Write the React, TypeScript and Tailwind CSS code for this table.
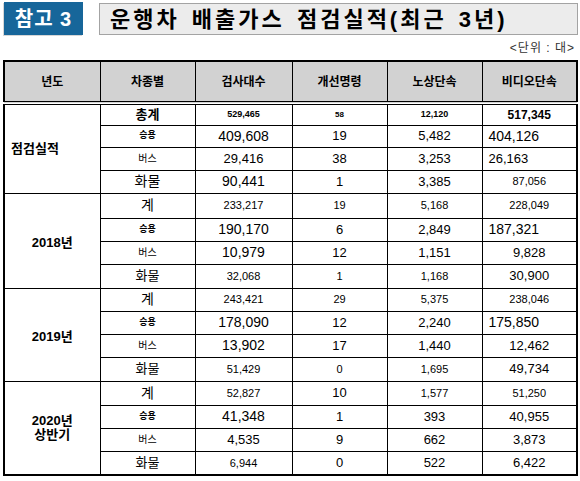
import React from "react";

type Cell = { v: string; c: string };
type Row = { label: string; lc: string; cells: Cell[] };
type Group = { name: string[]; nc: string; heights: string[]; rows: Row[] };

const tiny = "text-[9px] font-bold";
const sm = "text-[11px]";
const md = "text-[13px]";
const lg = "text-[14px]";
const left = "text-left pl-[6px]";

const groups: Group[] = [
  {
    name: ["점검실적"],
    nc: "text-left pl-[6px]",
    heights: ["h-[22px]", "h-[22px]", "h-[23px]", "h-[23px]"],
    rows: [
      {
        label: "총계",
        lc: "text-[13px] font-bold",
        cells: [
          { v: "529,465", c: tiny },
          { v: "58", c: "text-[8px] font-bold" },
          { v: "12,120", c: tiny },
          { v: "517,345", c: "text-[12px] font-bold" },
        ],
      },
      {
        label: "승용",
        lc: "text-[9px] font-bold",
        cells: [
          { v: "409,608", c: lg },
          { v: "19", c: md },
          { v: "5,482", c: md },
          { v: "404,126", c: `${lg} ${left}` },
        ],
      },
      {
        label: "버스",
        lc: "text-[10px]",
        cells: [
          { v: "29,416", c: md },
          { v: "38", c: md },
          { v: "3,253", c: md },
          { v: "26,163", c: `${md} ${left}` },
        ],
      },
      {
        label: "화물",
        lc: "text-[14px]",
        cells: [
          { v: "90,441", c: lg },
          { v: "1", c: md },
          { v: "3,385", c: md },
          { v: "87,056", c: sm },
        ],
      },
    ],
  },
  {
    name: ["2018년"],
    nc: "pt-[4px]",
    heights: ["h-[25px]", "h-[23px]", "h-[23px]", "h-[24px]"],
    rows: [
      {
        label: "계",
        lc: "text-[14px]",
        cells: [
          { v: "233,217", c: sm },
          { v: "19", c: sm },
          { v: "5,168", c: sm },
          { v: "228,049", c: sm },
        ],
      },
      {
        label: "승용",
        lc: "text-[9px] font-bold",
        cells: [
          { v: "190,170", c: lg },
          { v: "6", c: md },
          { v: "2,849", c: md },
          { v: "187,321", c: `${lg} ${left}` },
        ],
      },
      {
        label: "버스",
        lc: "text-[10px]",
        cells: [
          { v: "10,979", c: lg },
          { v: "12", c: md },
          { v: "1,151", c: md },
          { v: "9,828", c: md },
        ],
      },
      {
        label: "화물",
        lc: "text-[13px]",
        cells: [
          { v: "32,068", c: sm },
          { v: "1", c: sm },
          { v: "1,168", c: sm },
          { v: "30,900", c: md },
        ],
      },
    ],
  },
  {
    name: ["2019년"],
    nc: "pt-[4px]",
    heights: ["h-[23px]", "h-[23px]", "h-[23px]", "h-[24px]"],
    rows: [
      {
        label: "계",
        lc: "text-[14px]",
        cells: [
          { v: "243,421", c: sm },
          { v: "29", c: sm },
          { v: "5,375", c: sm },
          { v: "238,046", c: sm },
        ],
      },
      {
        label: "승용",
        lc: "text-[9px] font-bold",
        cells: [
          { v: "178,090", c: lg },
          { v: "12", c: md },
          { v: "2,240", c: md },
          { v: "175,850", c: `${lg} ${left}` },
        ],
      },
      {
        label: "버스",
        lc: "text-[10px]",
        cells: [
          { v: "13,902", c: lg },
          { v: "17", c: md },
          { v: "1,440", c: md },
          { v: "12,462", c: md },
        ],
      },
      {
        label: "화물",
        lc: "text-[13px]",
        cells: [
          { v: "51,429", c: sm },
          { v: "0", c: sm },
          { v: "1,695", c: sm },
          { v: "49,734", c: md },
        ],
      },
    ],
  },
  {
    name: ["2020년", "상반기"],
    nc: "",
    heights: ["h-[24px]", "h-[23px]", "h-[23px]", "h-[24px]"],
    rows: [
      {
        label: "계",
        lc: "text-[14px]",
        cells: [
          { v: "52,827", c: sm },
          { v: "10", c: md },
          { v: "1,577", c: sm },
          { v: "51,250", c: sm },
        ],
      },
      {
        label: "승용",
        lc: "text-[9px] font-bold",
        cells: [
          { v: "41,348", c: lg },
          { v: "1", c: md },
          { v: "393", c: md },
          { v: "40,955", c: md },
        ],
      },
      {
        label: "버스",
        lc: "text-[10px]",
        cells: [
          { v: "4,535", c: md },
          { v: "9", c: md },
          { v: "662", c: md },
          { v: "3,873", c: md },
        ],
      },
      {
        label: "화물",
        lc: "text-[13px]",
        cells: [
          { v: "6,944", c: sm },
          { v: "0", c: md },
          { v: "522", c: md },
          { v: "6,422", c: md },
        ],
      },
    ],
  },
];

const headers = [
  { t: "년도", c: "font-bold" },
  { t: "차종별", c: "" },
  { t: "검사대수", c: "" },
  { t: "개선명령", c: "font-bold" },
  { t: "노상단속", c: "" },
  { t: "비디오단속", c: "" },
];

export default function App() {
  return (
    <div className="w-[580px] h-[481px] bg-white text-black font-['Liberation_Sans','Noto_Sans_CJK_KR',sans-serif]">
      <div className="flex items-start pt-[2px] pl-[4px]">
        <div className="w-[79px] h-[33px] bg-[#17669a] text-white font-bold text-[20px] tracking-[1px] flex items-center justify-center shadow-[-1px_1px_0_#d6d6d6]">
          참고 3
        </div>
        <div className="ml-[16px] mt-[1px] w-[479px] h-[32px] bg-[#ececec] border border-[#a3a3a3] flex items-center pl-[10px] font-bold text-[22px] tracking-[3px] [word-spacing:3px]">
          운행차 배출가스 점검실적(최근 3년)
        </div>
      </div>
      <div className="h-[25px] flex items-center justify-end pr-[5px] text-[12px] tracking-[1px] text-[#333]">
        &lt;단위 : 대&gt;
      </div>
      <table className="ml-[3px] w-[573px] table-fixed border-collapse border-2 border-black text-center">
        <colgroup>
          <col className="w-[96px]" />
          <col className="w-[95px]" />
          <col className="w-[97px]" />
          <col className="w-[95px]" />
          <col className="w-[95px]" />
          <col className="w-[95px]" />
        </colgroup>
        <thead>
          <tr className="h-[42px] bg-[#d2d2d2] border-b-[4px] border-double border-black">
            {headers.map((h) => (
              <th key={h.t} className={`border border-black text-[12px] ${h.c}`}>
                {h.t}
              </th>
            ))}
          </tr>
        </thead>
        <tbody>
          {groups.map((g) =>
            g.rows.map((r, i) => (
              <tr key={g.name[0] + i} className={g.heights[i]}>
                {i === 0 && (
                  <td
                    rowSpan={4}
                    className={`border border-black font-bold text-[13px] leading-[14px] ${g.nc}`}
                  >
                    {g.name.map((n) => (
                      <div key={n}>{n}</div>
                    ))}
                  </td>
                )}
                <td className={`border border-black p-0 ${r.lc}`}>{r.label}</td>
                {r.cells.map((c, j) => (
                  <td key={j} className={`border border-black p-0 ${c.c}`}>
                    {c.v}
                  </td>
                ))}
              </tr>
            ))
          )}
        </tbody>
      </table>
    </div>
  );
}
